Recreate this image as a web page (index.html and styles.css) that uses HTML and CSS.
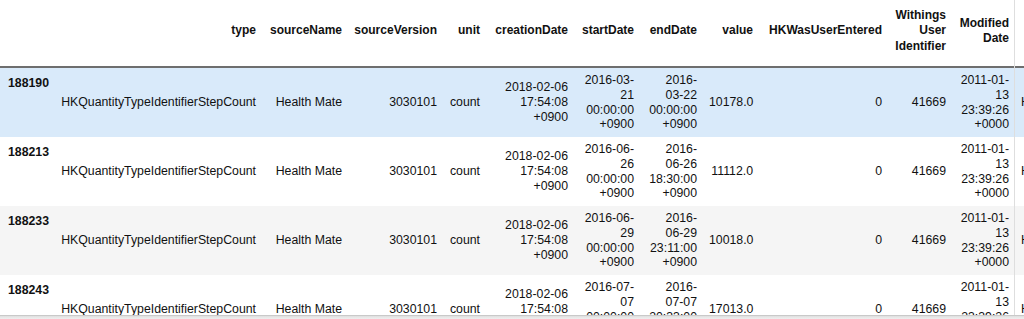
FILE: index.html
```html
<!DOCTYPE html>
<html lang="en">
<head>
<meta charset="utf-8">
<title>DataFrame</title>
<link rel="stylesheet" href="styles.css">
</head>
<body>
<div class="frame">
  <div class="df">
    <div class="row head">
      <div class="c"></div>
      <div class="c">type</div>
      <div class="c">sourceName</div>
      <div class="c">sourceVersion</div>
      <div class="c">unit</div>
      <div class="c">creationDate</div>
      <div class="c">startDate</div>
      <div class="c">endDate</div>
      <div class="c">value</div>
      <div class="c">HKWasUserEntered</div>
      <div class="c">Withings<br>User<br>Identifier</div>
      <div class="c">Modified<br>Date</div>
      <div class="c"></div>
    </div>

    <div class="row hover">
      <div class="c idx">188190</div>
      <div class="c">HKQuantityTypeIdentifierStepCount</div>
      <div class="c">Health Mate</div>
      <div class="c">3030101</div>
      <div class="c">count</div>
      <div class="c">2018-02-06<br>17:54:08<br>+0900</div>
      <div class="c">2016-03-<br>21<br>00:00:00<br>+0900</div>
      <div class="c">2016-<br>03-22<br>00:00:00<br>+0900</div>
      <div class="c">10178.0</div>
      <div class="c">0</div>
      <div class="c">41669</div>
      <div class="c">2011-01-<br>13<br>23:39:26<br>+0000</div>
      <div class="c clip">HKTimeZone</div>
    </div>

    <div class="row">
      <div class="c idx">188213</div>
      <div class="c">HKQuantityTypeIdentifierStepCount</div>
      <div class="c">Health Mate</div>
      <div class="c">3030101</div>
      <div class="c">count</div>
      <div class="c">2018-02-06<br>17:54:08<br>+0900</div>
      <div class="c">2016-06-<br>26<br>00:00:00<br>+0900</div>
      <div class="c">2016-<br>06-26<br>18:30:00<br>+0900</div>
      <div class="c">11112.0</div>
      <div class="c">0</div>
      <div class="c">41669</div>
      <div class="c">2011-01-<br>13<br>23:39:26<br>+0000</div>
      <div class="c clip">HKTimeZone</div>
    </div>

    <div class="row odd">
      <div class="c idx">188233</div>
      <div class="c">HKQuantityTypeIdentifierStepCount</div>
      <div class="c">Health Mate</div>
      <div class="c">3030101</div>
      <div class="c">count</div>
      <div class="c">2018-02-06<br>17:54:08<br>+0900</div>
      <div class="c">2016-06-<br>29<br>00:00:00<br>+0900</div>
      <div class="c">2016-<br>06-29<br>23:11:00<br>+0900</div>
      <div class="c">10018.0</div>
      <div class="c">0</div>
      <div class="c">41669</div>
      <div class="c">2011-01-<br>13<br>23:39:26<br>+0000</div>
      <div class="c clip">HKTimeZone</div>
    </div>

    <div class="row">
      <div class="c idx">188243</div>
      <div class="c">HKQuantityTypeIdentifierStepCount</div>
      <div class="c">Health Mate</div>
      <div class="c">3030101</div>
      <div class="c">count</div>
      <div class="c">2018-02-06<br>17:54:08<br>+0900</div>
      <div class="c">2016-07-<br>07<br>00:00:00<br>+0900</div>
      <div class="c">2016-<br>07-07<br>20:33:00<br>+0900</div>
      <div class="c">17013.0</div>
      <div class="c">0</div>
      <div class="c">41669</div>
      <div class="c">2011-01-<br>13<br>23:39:26<br>+0000</div>
      <div class="c clip">HKTimeZone</div>
    </div>
  </div>
  <div class="vline"></div>
  <div class="hbar"></div>
</div>
</body>
</html>
```

FILE: styles.css
```css
html, body {
  margin: 0;
  padding: 0;
  overflow: hidden;
  background: #ffffff;
}

.frame {
  position: relative;
  width: 1024px;
  height: 319px;
  overflow: hidden;
  font-family: "Liberation Sans", Arial, Helvetica, sans-serif;
  font-size: 12.3px;
  color: #111111;
}

.df {
  width: 1215px;
}

.row {
  display: grid;
  grid-template-columns: 52px 210px 86px 95px 43px 88px 66px 63px 56px 129px 64px 63px 200px;
  align-items: center;
  line-height: 14.75px;
  background: #ffffff;
}

.row.odd {
  background: #f5f5f5;
}

.row.hover {
  background: #d9eafa;
}

.c {
  box-sizing: border-box;
  padding: 5px 6px;
  text-align: right;
  white-space: nowrap;
}

.idx {
  align-self: start;
  text-align: left;
  font-weight: bold;
  padding: 8px 0 0 8px;
}

.clip {
  text-align: left;
}

.head {
  height: 68px;
  box-sizing: border-box;
  border-bottom: 2px solid #6e6e6e;
  padding-bottom: 4px;
  font-size: 12px;
  font-weight: bold;
  line-height: 15.5px;
}

.head .c {
  padding: 0 6px;
}

.vline {
  position: absolute;
  top: 0;
  bottom: 0;
  left: 1014px;
  width: 1px;
  background: #dedede;
}

.hbar {
  position: absolute;
  left: 0;
  right: 0;
  bottom: 0;
  height: 4px;
  background: linear-gradient(#bdbdbd, #e4e4e4 40%, #efefef);
}
```
